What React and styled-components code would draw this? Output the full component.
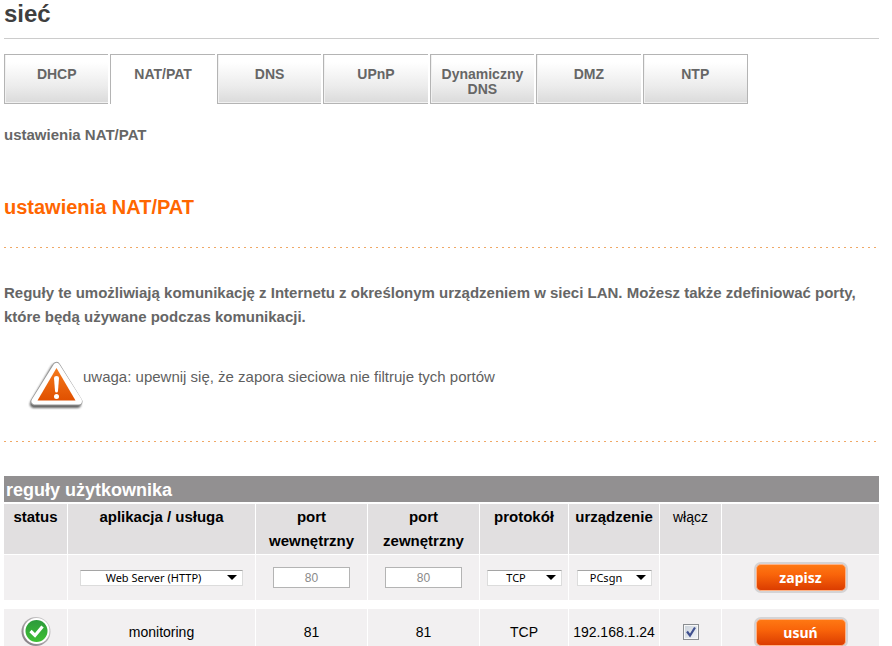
import React from "react";
import styled, { createGlobalStyle } from "styled-components";

const GlobalStyle = createGlobalStyle`
  *, *::before, *::after { box-sizing: border-box; }
  body {
    margin: 0;
    background: #fff;
    color: #5f5f5f;
    font: 15px/24px "Liberation Sans", Arial, sans-serif;
  }
`;

const Page = styled.main`
  padding: 0 13px 0 4px;
`;

const PageTitle = styled.h1`
  margin: 0;
  padding-bottom: 10px;
  border-bottom: 1px solid #ccc;
  color: #3f3f3f;
  font-size: 24px;
  line-height: 28px;
`;

const Tabs = styled.nav`
  display: flex;
  max-width: 744px;
  margin-top: 15px;
`;

const Tab = styled.a`
  flex: 1 1 0;
  height: 50px;
  margin-right: 2px;
  padding: 12px 4px 0;
  border: 1px solid #b4b4b4;
  border-right: 0;
  background: linear-gradient(#fff 15%, #ececec 65%, #dadada);
  box-shadow: inset 1px -1px 0 #f1f1f1;
  color: #666;
  font-size: 14px;
  font-weight: bold;
  line-height: 15px;
  text-align: center;
  text-decoration: none;

  &[aria-current="page"] {
    border-bottom: 0;
    background: #fff;
    box-shadow: none;
  }

  &:last-child {
    margin-right: 0;
    border-right: 1px solid #b4b4b4;
  }
`;

const Breadcrumb = styled.p`
  margin: 19px 0 0;
  color: #666;
  font-weight: bold;
`;

const SectionTitle = styled.h2`
  margin: 48px 0 28px;
  color: #f60;
  font-size: 20px;
  line-height: 24px;
`;

const DottedRule = styled.hr`
  height: 1px;
  margin: 0;
  border: 0;
  background: repeating-linear-gradient(90deg, #f0a866 0 2px, transparent 2px 6px);
`;

const Description = styled.p`
  margin: 33px 0 32px;
  color: #666;
  font-weight: bold;
`;

const Notice = styled.div`
  display: flex;
  align-items: flex-start;
  min-height: 80px;
  padding-left: 24px;
`;

const WarningIcon = styled.svg`
  flex: none;
  width: 55px;
  height: 50px;
`;

const NoticeText = styled.p`
  margin: 4px 0 0;
`;

const Rules = styled.table`
  width: 100%;
  margin-top: 34px;
  border-spacing: 0;
  table-layout: fixed;
  color: #000;
  text-align: center;
`;

const Caption = styled.caption`
  height: 26px;
  margin-bottom: 2px;
  padding: 2px;
  background: #929091;
  color: #fff;
  font-size: 18px;
  font-weight: bold;
  text-align: left;
`;

const Col = styled.col`
  width: ${({ $width }) => ($width ? `${$width}px` : "auto")};
`;

const HeadCell = styled.th`
  height: 51px;
  padding: 1px 0;
  border-right: 1px solid #fff;
  border-bottom: 1px solid #fff;
  background: #e1dfe0;
  font-size: ${({ $plain }) => ($plain ? "14px" : "15px")};
  font-weight: ${({ $plain }) => ($plain ? "normal" : "bold")};
  vertical-align: top;

  &:last-child { border-right: 0; }
`;

const Cell = styled.td`
  height: ${({ $entry }) => ($entry ? "54px" : "46px")};
  padding: 0;
  border-right: 1px solid #fff;
  border-bottom: ${({ $entry }) => ($entry ? "9px solid #fff" : "0")};
  background: #f2f0f1;
  font-size: 14px;
  white-space: nowrap;

  &:last-child { border-right: 0; }
`;

const Overlay = styled.span`
  display: grid;
  place-items: center;
  width: max-content;
  margin: 0 auto;

  > * { grid-area: 1 / 1; }
`;

const Select = styled.select`
  width: ${({ $width }) => $width}px;
  height: 16px;
  padding: 0 16px 0 0;
  appearance: none;
  border: 1px solid #dcdcdc;
  border-top-color: #a5a5a5;
  border-radius: 0;
  background: #fff;
  color: #000;
  font: 11px/14px "Noto Sans", sans-serif;
  text-align: center;
  text-align-last: center;
`;

const Arrow = styled.svg`
  justify-self: end;
  width: 10px;
  height: 5px;
  margin-right: 6px;
  pointer-events: none;
`;

const PortInput = styled.input`
  display: block;
  width: 77px;
  height: 21px;
  margin: 0 auto;
  padding: 0;
  border: 1px solid #b4b4b4;
  background: #fff;
  color: #8a8a8a;
  font: 12px "Liberation Sans", Arial, sans-serif;
  text-align: center;
`;

const Check = styled.input`
  width: 16px;
  height: 16px;
  margin: 0;
  appearance: none;
  border: 1px solid #8a8d91;
  background: linear-gradient(135deg, #c9d0da, #f4f6f9);
  box-shadow: inset 0 0 0 1px #f7f7f7;

  &:not(:checked) + svg { display: none; }
`;

const CheckMark = styled.svg`
  width: 12px;
  height: 12px;
  pointer-events: none;
`;

const StatusIcon = styled.svg`
  display: block;
  width: 32px;
  height: 32px;
  margin: 0 auto;
`;

const ActionButton = styled.button`
  display: block;
  width: 94px;
  height: 31px;
  margin: 0 auto;
  padding: 0;
  border: 2px solid #d5d3d4;
  border-radius: 7px;
  background: linear-gradient(#ff7a14, #f9640a 40%, #d93a00) padding-box;
  box-shadow: inset 0 0 0 1px #ffb184;
  color: #fff;
  font: bold 14px "Noto Sans", sans-serif;
`;

const tabs = ["DHCP", "NAT/PAT", "DNS", "UPnP", "Dynamiczny DNS", "DMZ", "NTP"];
const columnWidths = [64, 188, 112, 112, 89, 91, 62, null];
const headings = [
  "status",
  "aplikacja / usługa",
  "port wewnętrzny",
  "port zewnętrzny",
  "protokół",
  "urządzenie",
  "włącz",
  "",
];

function Dropdown({ label, width, options }) {
  return (
    <Overlay>
      <Select aria-label={label} $width={width}>
        {options.map((option) => (
          <option key={option}>{option}</option>
        ))}
      </Select>
      <Arrow viewBox="0 0 10 5" aria-hidden="true">
        <path d="M0 0h10L5 5z" fill="#000" />
      </Arrow>
    </Overlay>
  );
}

function Warning() {
  return (
    <WarningIcon viewBox="0 0 55 50" aria-hidden="true">
      <defs>
        <linearGradient id="warn-fill" x1="0" y1="0" x2="0" y2="1">
          <stop offset="0" stopColor="#f57a1c" />
          <stop offset="1" stopColor="#e05000" />
        </linearGradient>
        <filter id="warn-shadow" x="-20%" y="-20%" width="140%" height="150%">
          <feGaussianBlur stdDeviation="1" />
        </filter>
      </defs>
      <path d="M27 7 6 43h43z" fill="#444" stroke="#444" strokeWidth="8" strokeLinejoin="round" filter="url(#warn-shadow)" opacity=".85" />
      <path d="M28.500 5 6.500 40.500h44z" fill="#999" stroke="#999" strokeWidth="8" strokeLinejoin="round" />
      <path d="M28.500 5.500 7 40h43.500z" fill="#fff" stroke="#fff" strokeWidth="7" strokeLinejoin="round" />
      <path d="M28.500 7 9.500 39.500h38z" fill="url(#warn-fill)" />
      <path d="M26 17q0-2 2.500-2t2.500 2l-1 13q-.2 1.500-1.500 1.500T27 30z" fill="#fff" />
      <circle cx="28.500" cy="35.500" r="2.500" fill="#fff" />
    </WarningIcon>
  );
}

function StatusOk() {
  return (
    <StatusIcon viewBox="0 0 32 32" role="img" aria-label="aktywna">
      <defs>
        <linearGradient id="ok-fill" x1="0" y1="0" x2="0" y2="1">
          <stop offset="0" stopColor="#2c9a3c" />
          <stop offset="1" stopColor="#3fc033" />
        </linearGradient>
        <linearGradient id="ok-rim" x1="1" y1="0" x2="0" y2="1">
          <stop offset="0" stopColor="#d8d8d8" />
          <stop offset="1" stopColor="#7d757b" />
        </linearGradient>
      </defs>
      <circle cx="16" cy="15.500" r="14.500" fill="url(#ok-rim)" />
      <circle cx="16.500" cy="15" r="13" fill="#fff" />
      <circle cx="16.500" cy="15" r="11" fill="url(#ok-fill)" />
      <path d="m10.500 15 4.500 4.500 7.500-9" fill="none" stroke="#fff" strokeWidth="3.200" />
    </StatusIcon>
  );
}

export default function App() {
  return (
    <>
      <GlobalStyle />
      <Page>
        <PageTitle>sieć</PageTitle>
        <Tabs>
          {tabs.map((tab) => (
            <Tab key={tab} href="#" aria-current={tab === "NAT/PAT" ? "page" : undefined}>
              {tab}
            </Tab>
          ))}
        </Tabs>
        <Breadcrumb>ustawienia NAT/PAT</Breadcrumb>
        <SectionTitle>ustawienia NAT/PAT</SectionTitle>
        <DottedRule />
        <Description>
          Reguły te umożliwiają komunikację z Internetu z określonym urządzeniem w sieci LAN. Możesz
          także zdefiniować porty, które będą używane podczas komunikacji.
        </Description>
        <Notice>
          <Warning />
          <NoticeText>uwaga: upewnij się, że zapora sieciowa nie filtruje tych portów</NoticeText>
        </Notice>
        <DottedRule />
        <Rules>
          <Caption>reguły użytkownika</Caption>
          <colgroup>
            {columnWidths.map((width, index) => (
              <Col key={index} $width={width} />
            ))}
          </colgroup>
          <thead>
            <tr>
              {headings.map((heading, index) => (
                <HeadCell key={index} scope="col" $plain={heading === "włącz"}>
                  {heading}
                </HeadCell>
              ))}
            </tr>
          </thead>
          <tbody>
            <tr>
              <Cell $entry />
              <Cell $entry>
                <Dropdown label="aplikacja / usługa" width={163} options={["Web Server (HTTP)"]} />
              </Cell>
              <Cell $entry>
                <PortInput aria-label="port wewnętrzny" defaultValue="80" />
              </Cell>
              <Cell $entry>
                <PortInput aria-label="port zewnętrzny" defaultValue="80" />
              </Cell>
              <Cell $entry>
                <Dropdown label="protokół" width={75} options={["TCP", "UDP"]} />
              </Cell>
              <Cell $entry>
                <Dropdown label="urządzenie" width={75} options={["PCsgn"]} />
              </Cell>
              <Cell $entry />
              <Cell $entry>
                <ActionButton type="button">zapisz</ActionButton>
              </Cell>
            </tr>
            <tr>
              <Cell>
                <StatusOk />
              </Cell>
              <Cell>monitoring</Cell>
              <Cell>81</Cell>
              <Cell>81</Cell>
              <Cell>TCP</Cell>
              <Cell>192.168.1.24</Cell>
              <Cell>
                <Overlay>
                  <Check type="checkbox" aria-label="włącz" defaultChecked />
                  <CheckMark viewBox="0 0 12 12" aria-hidden="true">
                    <path d="m2 5.500 3 4L10 1.500" fill="none" stroke="#40508f" strokeWidth="2.200" />
                  </CheckMark>
                </Overlay>
              </Cell>
              <Cell>
                <ActionButton type="button">usuń</ActionButton>
              </Cell>
            </tr>
          </tbody>
        </Rules>
      </Page>
    </>
  );
}
